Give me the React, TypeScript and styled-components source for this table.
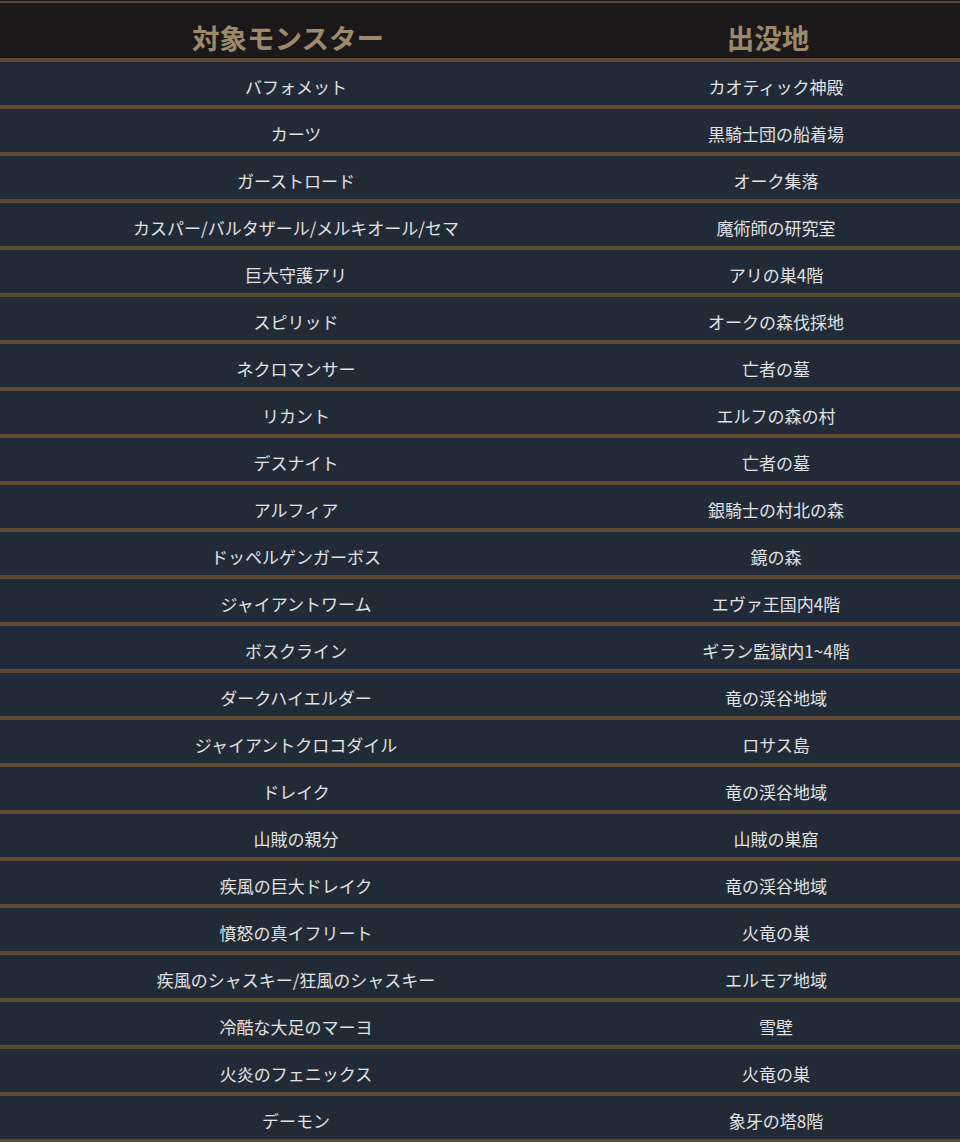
import styled, { createGlobalStyle } from "styled-components";

const GlobalStyle = createGlobalStyle`
  html, body {
    margin: 0;
    padding: 0;
    background: #1a1818;
  }
  body {
    font-family: "Noto Sans CJK JP", "Noto Sans", sans-serif;
  }
`;

const Table = styled.div`
  margin-top: 1px;
  border-top: 2px solid #5e4a35;
  width: 960px;
`;

const Row = styled.div<{ head?: boolean }>`
  display: grid;
  grid-template-columns: 592px 1fr;
  height: ${(p) => (p.head ? "55px" : "43px")};
  background: ${(p) => (p.head ? "#1a1818" : "#212b37")};
  border-bottom: 4px solid #5e4a35;
`;

const Cell = styled.div<{ head?: boolean }>`
  display: flex;
  align-items: center;
  justify-content: center;
  padding-top: ${(p) => (p.head ? "12px" : "6px")};
  padding-right: ${(p) => (p.head ? "16px" : "0")};
  box-sizing: border-box;
  color: ${(p) => (p.head ? "#9c8a6a" : "#e2e2e2")};
  font-size: ${(p) => (p.head ? "27.5px" : "17px")};
  font-weight: ${(p) => (p.head ? 700 : 400)};
  white-space: nowrap;
`;

const monsters = [
  ["バフォメット", "カオティック神殿"],
  ["カーツ", "黒騎士団の船着場"],
  ["ガーストロード", "オーク集落"],
  ["カスパー/バルタザール/メルキオール/セマ", "魔術師の研究室"],
  ["巨大守護アリ", "アリの巣4階"],
  ["スピリッド", "オークの森伐採地"],
  ["ネクロマンサー", "亡者の墓"],
  ["リカント", "エルフの森の村"],
  ["デスナイト", "亡者の墓"],
  ["アルフィア", "銀騎士の村北の森"],
  ["ドッペルゲンガーボス", "鏡の森"],
  ["ジャイアントワーム", "エヴァ王国内4階"],
  ["ボスクライン", "ギラン監獄内1~4階"],
  ["ダークハイエルダー", "竜の渓谷地域"],
  ["ジャイアントクロコダイル", "ロサス島"],
  ["ドレイク", "竜の渓谷地域"],
  ["山賊の親分", "山賊の巣窟"],
  ["疾風の巨大ドレイク", "竜の渓谷地域"],
  ["憤怒の真イフリート", "火竜の巣"],
  ["疾風のシャスキー/狂風のシャスキー", "エルモア地域"],
  ["冷酷な大足のマーヨ", "雪壁"],
  ["火炎のフェニックス", "火竜の巣"],
  ["デーモン", "象牙の塔8階"],
];

export default function App() {
  return (
    <>
      <GlobalStyle />
      <Table>
        <Row head>
          <Cell head>対象モンスター</Cell>
          <Cell head>出没地</Cell>
        </Row>
        {monsters.map(([name, place]) => (
          <Row key={name}>
            <Cell>{name}</Cell>
            <Cell>{place}</Cell>
          </Row>
        ))}
      </Table>
    </>
  );
}
